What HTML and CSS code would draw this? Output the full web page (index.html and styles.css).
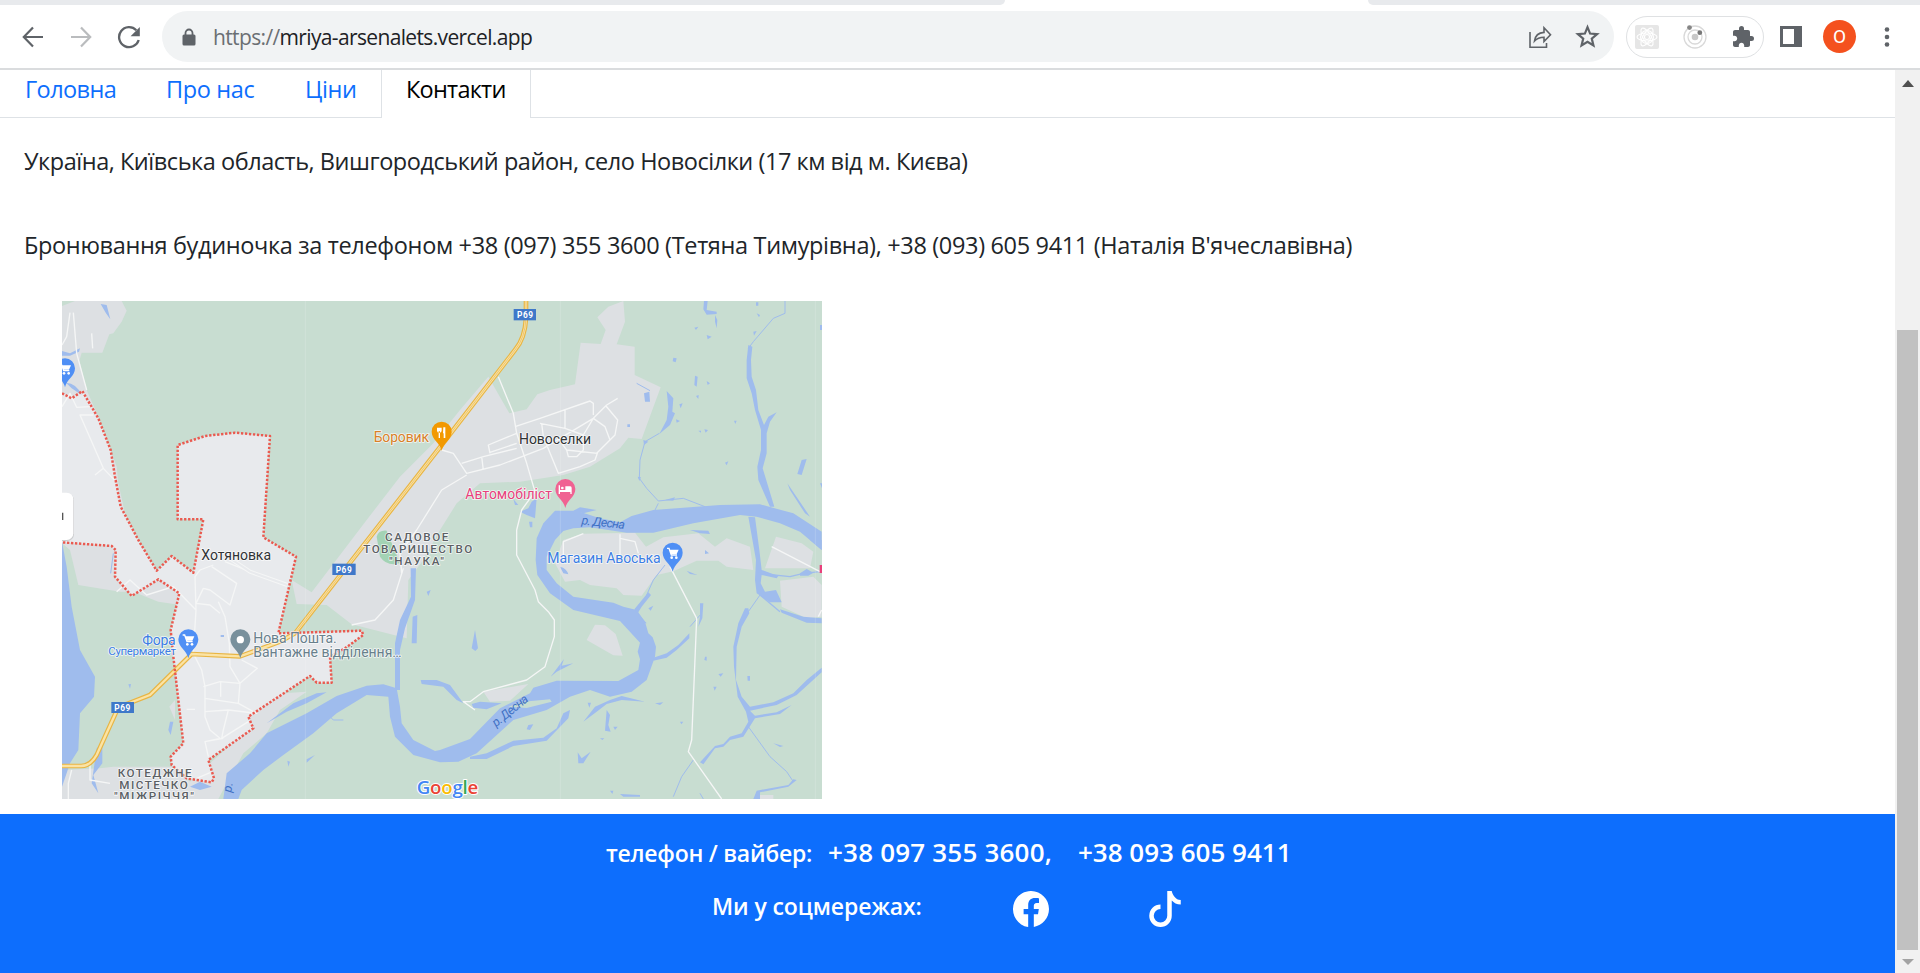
FILE: index.html
```html
<!DOCTYPE html>
<html lang="uk">
<head>
<meta charset="utf-8">
<title>Мрія Арсеналець</title>
<link rel="stylesheet" href="styles.css">
</head>
<body>
<div class="browser">
  <div class="tabstrip"><div class="tabs-left"></div><div class="tabs-right"></div></div>
  <header class="toolbar">
    <div class="nav-buttons">
      <svg class="icon" viewBox="0 0 24 24" fill="none" stroke="#5f6368" stroke-width="2.2"><path d="M22 12H3M12 2.5L2.8 12l9.2 9.5"/></svg>
      <svg class="icon" viewBox="0 0 24 24" fill="none" stroke="#babcbe" stroke-width="2.2"><path d="M2 12h19M12 2.5l9.2 9.5-9.2 9.5"/></svg>
      <svg class="icon" viewBox="0 0 24 24"><path d="M19.3 5.2A10 10 0 1 0 21.7 15" fill="none" stroke="#5f6368" stroke-width="2.3"/><path d="M22.8 2v9.2h-9.2z" fill="#5f6368"/></svg>
    </div>
    <div class="omnibox">
      <svg class="lock" viewBox="0 0 14 18"><path d="M3.5 8V5a3.5 3.5 0 0 1 7 0v3" fill="none" stroke="#5f6368" stroke-width="1.8"/><rect x=".5" y="6.5" width="13" height="11" rx="1.5" fill="#5f6368"/></svg>
      <span class="url"><span class="scheme">https://</span>mriya-arsenalets.vercel.app</span>
      <svg class="share" viewBox="0 0 24 24" fill="none" stroke="#5f6368" stroke-width="1.6"><path d="M2 7v15.2h16.5V18M6.5 16c.7-5 3.5-8.3 9.5-8.6V2.8l6.5 7-6.5 6.8v-4.4c-4 0-7 1-9.500 3.800z"/></svg>
      <svg class="star" viewBox="0 0 24 24" fill="none" stroke="#5f6368" stroke-width="2.1"><path d="M12 3l2.5 6.200 6.700.5-5.100 4.300 1.600 6.600-5.700-3.600-5.700 3.600 1.600-6.600-5.100-4.300 6.700-.5z"/></svg>
    </div>
    <div class="extensions">
      <svg class="icon" viewBox="0 0 24 24"><rect width="24" height="24" rx="2" fill="#e6e6e6"/><g fill="none" stroke="#fff" stroke-width="1.1"><circle cx="12" cy="12" r="2.500"/><ellipse cx="12" cy="12" rx="10" ry="4"/><ellipse cx="12" cy="12" rx="10" ry="4" transform="rotate(60 12 12)"/><ellipse cx="12" cy="12" rx="10" ry="4" transform="rotate(120 12 12)"/><circle cx="12" cy="12" r="6.500"/></g></svg>
      <svg class="icon" viewBox="0 0 24 24"><g fill="none" stroke="#d9d9d9" stroke-width="1.3"><circle cx="12" cy="12" r="11"/><circle cx="12" cy="12" r="7"/></g><circle cx="12" cy="12" r="3.300" fill="#c8c8c8"/><circle cx="6.500" cy="2.600" r="2.400" fill="#858585"/><circle cx="16.800" cy="7.700" r="2.400" fill="#777"/></svg>
      <svg class="icon" viewBox="0 0 24 24"><path fill="#5f6368" d="M20.500 11H19V7c0-1.100-.9-2-2-2h-4V3.500a2.500 2.500 0 0 0-5 0V5H4c-1.100 0-2 .9-2 2v3.800h1.500c1.500 0 2.700 1.200 2.700 2.700S5 16.200 3.500 16.200H2V20c0 1.100.9 2 2 2h3.800v-1.500c0-1.500 1.200-2.700 2.700-2.700s2.700 1.200 2.700 2.700V22H17c1.100 0 2-.9 2-2v-4h1.500a2.500 2.500 0 0 0 0-5z"/></svg>
    </div>
    <svg class="panel" viewBox="0 0 22 21"><path fill="#5f6368" fill-rule="evenodd" d="M0 0h22v21H0zM3 3v15h11V3z"/></svg>
    <div class="avatar">O</div>
    <svg class="dots" viewBox="0 0 6 20" fill="#5f6368"><circle cx="3" cy="2.500" r="2.300"/><circle cx="3" cy="10" r="2.300"/><circle cx="3" cy="17.500" r="2.300"/></svg>
  </header>
  <div class="viewport">
    <div class="page">
      <nav class="tabs">
        <a class="tab t1">Головна</a><a class="tab t2">Про нас</a><a class="tab t3">Ціни</a><a class="tab active">Контакти</a>
      </nav>
      <main class="content">
        <p class="line address">Україна, Київська область, Вишгородський район, село Новосілки (17 км від м. Києва)</p>
        <p class="line booking">Бронювання будиночка за телефоном +38 (097) 355 3600 (Тетяна Тимурівна), +38 (093) 605 9411 (Наталія В'ячеславівна)</p>
        <svg class="map" viewBox="36 33 2280 1494" preserveAspectRatio="none">
          <rect x="36" y="33" width="2280" height="1494" fill="#c8ddd1"/>
          <!-- built-up land -->
          <g fill="#dde0e3">
            <path d="M36 48L75 33H215L230 62L215 95L190 130L178 133L157 188H95L88 212L110 300L145 380L200 530L205 580L225 670L265 750L320 842L365 798L430 848L430 950L325 935L250 905L210 905L85 885L60 780L36 760z"/>
            <path d="M785 907L950 690L1050 560L1150 460L1230 360L1315 260L1378 370L1430 358L1462 313L1500 300L1575 283L1592 158L1652 162L1667 120L1642 82L1675 50L1720 33L1725 95L1700 163L1754 170V255L1832 292L1775 447L1735 443L1710 475L1620 530L1540 555L1410 575L1290 580L1220 640L1170 720L1120 810L1075 870L1070 1045L905 1003L830 945L740 942L725 870z"/>
            <path d="M36 1440L150 1435L190 1430L365 1430L420 1475L600 1310L595 1280L700 1210L770 1205L690 1260L650 1330L580 1390L530 1480L505 1527H36z"/>
            <path d="M358 1250L375 1230V1290z"/>
            <path d="M1540 750L1600 731L1755 728L1788 770L1840 742L1945 730L1995 770L2030 745L2100 770L2110 840L2030 830L2005 812L1940 812L1870 844L1820 855L1775 917L1720 915L1700 895L1620 885L1590 870L1545 875L1515 820z"/>
            <path d="M2178 740L2255 760L2290 785L2280 835L2145 835zM2190 872L2290 860L2315 885V980L2270 985L2195 950zM1610 1050L1635 1004L1665 1006L1697 1032L1718 1097L1690 1096zM1300 1205L1435 1182L1380 1232L1320 1235zM2115 1515H2170V1527H2115z"/>
          </g>
          <path d="M980 740Q985 720 1010 722L1050 820Q1010 830 990 800z" fill="#a3d3b4"/>
          <path fill="#e8eaed" d="M36 310L65 325L97 303L145 385L182 480L195 560L212 650L265 750L320 842L365 798L430 848L460 688H383V465L465 438L555 428L660 438L640 742L738 800L685 1030L935 1022L940 1035L885 1075L840 1100L845 1178H800L780 1158L595 1280L610 1315L475 1410L492 1465L485 1477L410 1465L365 1425L362 1400L400 1360L370 1100L362 1020L388 910L325 868L245 918L195 860L197 780L185 768L36 757z"/>
          <!-- water -->
          <g fill="#9fbced">
            <path d="M36 755L50 830L65 950L90 1080L135 1160L132 1220L90 1270L85 1380L60 1420L36 1490zM152 42L170 45L181 88L168 70zM36 183L60 190L90 175L87 185L60 197H36zM48 278Q80 280 95 315L65 295zM140 1375L157 1360V1420L130 1455L145 1510L125 1480zM360 1295H370L362 1335L355 1320zM420 1490L450 1475L485 1490L450 1500z"/>
            <path d="M1082 835H1098L1095 930L1065 1015L1050 1080V1200H1035V1060L1050 990L1083 920zM1088 980L1102 975L1100 1060L1085 1060zM1130 905L1142 900L1135 918zM1112 1170H1160L1200 1185L1240 1240L1220 1230L1180 1190L1115 1182z"/>
            <path d="M650 1300L730 1240L800 1210L830 1207L770 1240L710 1265z"/>
            <g transform="translate(1170 750)">
              <path d="M1145 -25L1060 -80L960 -107L840 -105L640 -90L575 -72L540 -53L480 -65L410 -88H345L310 -50L290 -5L287 60L292 105L330 160L400 210L540 243L600 308L593 335L600 358L595 390L535 423L350 422L280 443L270 460L180 505L90 597L0 630L-15 633L-80 600L-115 550L-120 500L-130 445L-170 433L-220 437L-310 468L-400 520L-520 580L-570 640L-640 700L-650 777H-605L-595 750L-530 690L-470 645L-380 580L-310 520L-220 465L-155 470L-150 530L-135 590L-80 645L0 667L55 665L110 640L220 540L320 510L390 470L450 450L510 470L575 455L620 420L645 350L648 320L638 292L625 280L615 245L590 210L550 200L520 188L400 170L350 130L320 90V50L345 0L370 -27L400 -35L450 -38L560 -22H640L760 -50L900 -75L950 -70L1020 -50L1080 -25L1145 30z"/>
              <path d="M400 -88L420 -98L470 -90L430 -80zM750 -30L805 -28L810 -18L780 -20zM925 -70L945 -68L958 30L965 90L1015 108L1010 115L965 105L962 130L975 155L1008 150L1025 187H990L950 160L945 120L948 60zM1020 208L1090 230L1145 235V250L1100 248L1025 218zM1080 100L1100 87L1120 98L1105 107H1080zM1110 0H1145V30z"/>
              <path d="M625 157L633 165L605 200L593 220L620 250L610 250L583 208zM640 353L680 340L715 315L748 280V295L710 330L680 353L640 362zM780 190H790L787 235L775 260L780 230zM795 350L800 350V362L793 360zM835 402L850 400L842 410zM820 440L830 440L824 452zM922 408H930V422H923zM95 325L105 270L114 325L106 333zM332 410L372 357L365 377L400 370L350 395zM360 80Q380 85 385 103L370 100zM740 92L772 105L750 102zM795 30L807 40L795 42zM625 205L640 197L632 212z"/>
              <path d="M90 650L140 640L220 602L310 593L350 565L370 520L390 510L385 535L320 602L220 618L140 657H90zM95 492L120 485L185 490L140 508L100 503zM430 545L465 500L510 480L545 468L615 485L545 480L500 492L470 515zM500 510L510 525L505 555L512 575L495 572zM265 555L280 553L270 570L260 568zM443 488H453L448 503zM645 490L670 487L660 495zM413 637L425 655L452 635L430 670H415zM520 560L533 560L525 570zM540 762L600 765V770H550zM720 545L730 545L724 553zM480 595H493L487 600zM510 752L520 752L517 762zM1000 610L1030 618L1020 621z"/>
              <path d="M915 205H925L928 220L905 260L890 320L888 420L905 470L930 500L1000 487L1060 460L1100 420L1145 383V397L1070 465L1010 495L930 512L945 527L1010 517L1055 495L1020 522L945 535L910 590L870 600L850 620L825 625L790 673L780 667L825 618L850 612L870 590L905 580L925 545L918 515L893 470L882 380L880 320L895 250zM1070 720L1045 740L960 757V777H940L950 752L1045 735L1060 718z"/>
            </g>
            <g transform="translate(1170 0)">
              <path d="M792 33H803L800 60L830 65V72L800 74L790 58zM825 75L832 90L830 115L825 95zM925 165L937 170L933 210L935 260L948 300L955 360L972 405L985 380L1010 367L990 395L980 430L980 490L968 535L1003 650L990 650L955 570L952 530L963 480L963 420L945 360L935 310L920 265V210zM680 303L700 325L697 365L705 370L690 405L658 432L680 390L685 350zM1072 552L1085 510L1100 507L1085 555zM1042 580L1110 680L1095 670L1050 600zM240 665L265 655L275 635L290 625L285 685L260 675zM267 695H277V712H270zM220 627L235 645L225 645z"/>
              <path d="M765 257L773 260L770 290L763 285zM700 203L710 205L707 217L698 214zM940 125L950 123L942 137zM800 135L815 140L803 148zM763 113L775 110L768 120zM950 70L960 75L957 82zM948 37H955V47H948zM800 273L810 280L803 285zM768 318L776 315L775 327zM718 343L728 340L722 355zM882 392L890 392L886 402zM708 388L720 393L710 398zM793 418L804 420L797 428zM775 422H783V428zM562 403H570V411H562zM612 310L628 305L630 335L615 335zM855 518L865 514L860 526zM610 450L625 455L612 465zM593 560L603 562L598 573zM675 630L705 622L700 632z"/>
            </g>
            <path d="M2310 105H2316V120H2310zM2310 580H2316V595zM235 1183L243 1182L240 1196zM512 1035H522V1041H512zM770 1408L795 1395L770 1418zM712 1412L720 1415L715 1430z"/>
          </g>
          <g fill="none" stroke="#9fbced" stroke-width="3">
            <path d="M2205 33V70L2170 85L2110 155L2095 175M1828 430L1785 455L1770 510L1768 565L1790 595L1825 633L1900 625L1965 650M1825 640L1815 660M1760 280L1800 302M1845 825L1810 870L1790 915M2130 915L2095 965M2095 1310L2160 1400L2210 1445L2230 1475M1930 1410L1895 1460L1870 1520M1950 1510L1960 1527M1920 1010L1955 970M835 1275L850 1290H880M190 790L182 850"/>
            <path d="M2125 850L2220 860L2260 850L2310 845M2130 915L2190 965" stroke-width="4"/>
          </g>
          <path d="M1375 1250L1420 1235L1500 1228L1505 1235L1430 1254z" fill="#c8ddd1"/>
          <!-- minor roads -->
          <g fill="none" stroke="#f5f6f6" stroke-width="4" stroke-linejoin="round">
            <path d="M60 68L50 140L36 165M70 68L80 190L110 300M125 130L128 175M36 350L60 310L80 352L120 350M130 375H90L160 535L135 555M160 535L195 572M200 905L240 870L290 915L370 890L438 960M490 825L450 840L435 860L438 960L430 1090L455 1140L465 1190V1280L480 1320L510 1345L465 1355L475 1400M485 830L560 880L540 945L480 900L460 895L438 940L480 945L510 970M505 935L525 980L538 1060L540 1130L570 1180L565 1240L465 1225M525 815L600 845L710 885M575 1110L622 1135L570 1180L510 1175L460 1190M512 1175V1220M565 1240L620 1270L535 1260L465 1265M535 1260L520 1320L515 1345L595 1295M465 1355L520 1345M410 1258H435M1060 835L1030 930L975 990L905 1005M65 1440L55 1480V1527M120 1425V1470L180 1480M440 1465L480 1448"/>
            <path d="M1345 260L1390 370L1400 430L1430 520L1455 605L1415 660L1400 720V795L1455 900L1465 935L1495 965L1513 990V1040L1485 1130L1430 1170L1300 1205L1260 1235H1240L1275 1260"/>
            <path d="M1175 480L1210 490L1250 550L1350 525L1480 475L1630 385L1670 345L1703 325M1175 600L1250 555M1175 600L1100 720L1050 790L1055 850M1235 520L1300 500L1400 475M1320 490L1315 465L1400 430M1295 500L1300 540M1320 487L1400 460M1395 410L1470 385L1620 333L1630 340V375M1470 400L1545 415V360M1475 400L1480 440L1525 550L1590 530L1635 510L1642 490L1550 480L1555 500L1580 500L1600 480L1600 435L1545 415M1600 435L1630 385L1665 410L1680 450M1668 348L1703 390L1695 435L1640 490M1550 480L1535 460M1710 800V733M1540 810V755L1600 731M1710 745L1755 755L1765 790M1860 830L1940 985L1925 1350L1915 1385L2015 1527M2165 770L2310 845M2315 960L2305 980"/>
          </g>
          <path d="M540 805L600 845L712 885" fill="none" stroke="#f5f6f6" stroke-width="12"/>
          <path d="M540 805L600 845L712 885" fill="none" stroke="#e8eaed" stroke-width="6"/>
          <g fill="none" stroke-linejoin="round">
            <path d="M1428 33V85Q1425 145 1395 180L1175 465L735 1030L690 1055L570 1099L425 1092L300 1215L205 1252L140 1395Q120 1430 90 1428H36" stroke="#e8b544" stroke-width="14"/>
            <path d="M1428 33V85Q1425 145 1395 180L1175 465L735 1030L690 1055L570 1099L425 1092L300 1215L205 1252L140 1395Q120 1430 90 1428H36" stroke="#fbe3a4" stroke-width="7"/>
            <path d="M1428 33V85Q1425 145 1395 180L1175 465L735 1030" stroke="#e3b75a" stroke-width="2"/>
            <path stroke="#ea5a50" stroke-width="7.500" stroke-dasharray="7 5" d="M36 310L65 325L97 303L145 385L182 480L195 560L212 650L265 750L320 842L365 798L430 848L460 688H383V465L465 438L555 428L660 438L640 742L738 800L685 1030L935 1022L940 1035L885 1075L840 1100L845 1178H800L780 1158L595 1280L610 1315L475 1410L492 1465L485 1477L410 1465L365 1425L362 1400L400 1360L370 1100L362 1020L388 910L325 868L245 918L195 860L197 780L185 768L36 757"/>
          </g>
          <path d="M766 33V1527M1531 33V1527M2296 33V1527" stroke="#fff" stroke-opacity=".25" stroke-width="2"/>
          <!-- road shields -->
          <g class="shield">
            <rect x="1391" y="57" width="67" height="34"/><rect x="847" y="821" width="70" height="34"/><rect x="184" y="1236" width="68" height="33"/>
            <text x="1401" y="83" textLength="48">P69</text><text x="857" y="848" textLength="48">P69</text><text x="193" y="1262" textLength="48">P69</text>
          </g>
          <!-- place markers -->
          <defs><path id="pin" d="M0 0C-5 -25 -30 -32 -30 -57A30 30 0 0 1 30 -57C30 -32 5 -25 0 0z"/>
            <g id="cart"><path d="M-17 -70H-11L-4 -50H13" fill="none" stroke="#fff" stroke-width="4"/><path d="M-10 -66H18L12 -53H-5z" fill="#fff"/><circle cx="-3" cy="-42" r="4" fill="#fff"/><circle cx="11" cy="-42" r="4" fill="#fff"/></g></defs>
          <g transform="translate(45 292)"><use href="#pin" fill="#4f8ff5"/><use href="#cart"/></g>
          <g transform="translate(415 1105)"><use href="#pin" fill="#4f8ff5"/><use href="#cart"/></g>
          <g transform="translate(1868 845)"><use href="#pin" fill="#4f8ff5"/><use href="#cart"/></g>
          <g transform="translate(571 1105)"><use href="#pin" fill="#78909c"/><circle cy="-56" r="11" fill="#fff"/></g>
          <g transform="translate(1175 482)"><use href="#pin" fill="#f29900"/><path d="M-14 -69V-60Q-14 -54 -7 -54T0 -60V-69zM-9 -58H-5V-38H-9zM5 -70H11V-38H6V-52H4z" fill="#fff"/></g>
          <g transform="translate(1546 654)"><use href="#pin" fill="#f06292"/><path d="M-20 -68H-16V-54H0V-65H15Q19 -65 19 -60V-42H15V-48H-16V-42H-20z" fill="#fff"/><circle cx="-9" cy="-60" r="4" fill="#fff"/></g>
          <g class="label">
            <text x="971" y="456" textLength="166" fill="#d98028">Боровик</text>
            <text x="1407" y="462" textLength="216" fill="#303336">Новоселки</text>
            <text x="454" y="809" textLength="209" fill="#303336">Хотяновка</text>
            <text x="1246" y="627" textLength="260" fill="#e8407b">Автомобіліст</text>
            <text x="1492" y="818" textLength="340" fill="#3b7de4">Магазин Авоська</text>
            <text x="277" y="1064" textLength="100" fill="#3b7de4">Фора</text>
            <text class="small" x="175" y="1096" textLength="203" fill="#3b7de4">Супермаркет</text>
            <text x="610" y="1058" textLength="250" fill="#68808c">Нова Пошта.</text>
            <text x="610" y="1100" textLength="445" fill="#68808c">Вантажне відділення…</text>
          </g>
          <g class="label area">
            <text x="1005" y="753" textLength="190">САДОВОЕ</text>
            <text x="940" y="789" textLength="327">ТОВАРИЩЕСТВО</text>
            <text x="1017" y="825" textLength="165">"НАУКА"</text>
            <text x="203" y="1462" textLength="222">КОТЕДЖНЕ</text>
            <text x="208" y="1498" textLength="205">МІСТЕЧКО</text>
            <text x="192" y="1530" textLength="240">"МІЖРІЧЧЯ"</text>
          </g>
          <g class="river">
            <text transform="translate(1594 703) rotate(6)" textLength="130">р. Десна</text>
            <text transform="translate(1338 1312) rotate(-39)" textLength="128">р. Десна</text>
            <text transform="translate(544 1508) rotate(-82)">р.</text>
          </g>
          <text class="google" x="1100" y="1512" textLength="185"><tspan fill="#4285f4">G</tspan><tspan fill="#ea4335">o</tspan><tspan fill="#fbbc04">o</tspan><tspan fill="#4285f4">g</tspan><tspan fill="#34a853">l</tspan><tspan fill="#ea4335">e</tspan></text>
          <rect x="0" y="611" width="72" height="142" rx="20" fill="#999" opacity=".35"/>
          <rect x="0" y="608" width="70" height="142" rx="20" fill="#fff"/>
          <path d="M36 668H40V690H36z" fill="#555"/>
          <path d="M2309 825H2316V849H2309z" fill="#e8407b"/>
        </svg>
      </main>
      <footer class="footer">
        <div class="phones"><span class="foot-label">телефон / вайбер:</span><span class="phone first">+38 097 355 3600,</span><span class="phone second">+38 093 605 9411</span></div>
        <div class="social"><span class="foot-label soc">Ми у соцмережах:</span>
          <svg class="brand fb" viewBox="0 0 16 16" fill="#fff"><path d="M16 8.049c0-4.446-3.582-8.050-8-8.050C3.580 0-.002 3.603-.002 8.050c0 4.017 2.926 7.347 6.750 7.951v-5.625h-2.030V8.050H6.750V6.275c0-2.017 1.195-3.131 3.022-3.131.876 0 1.791.157 1.791.157v1.980h-1.009c-.993 0-1.303.621-1.303 1.258v1.510h2.218l-.354 2.326H9.250V16c3.824-.604 6.750-3.934 6.750-7.951z"/></svg>
          <svg class="brand" viewBox="0 0 16 16" fill="#fff"><path d="M9 0h1.980c.144.715.540 1.617 1.235 2.512C12.895 3.389 13.797 4 15 4v2c-1.753 0-3.070-.814-4-1.829V11a5 5 0 1 1-5-5v2a3 3 0 1 0 3 3z"/></svg>
        </div>
      </footer>
    </div>
    <div class="scrollbar">
      <svg class="arrow" viewBox="0 0 12 7"><path d="M0 7L6 0l6 7z" fill="#505050"/></svg>
      <div class="thumb"></div>
      <svg class="arrow" viewBox="0 0 12 7"><path d="M0 0h12L6 6z" fill="#a3a3a3"/></svg>
    </div>
  </div>
</div>
</body>
</html>
```
FILE: styles.css
```css
* { box-sizing: border-box; }
body { margin: 0; background: #fff; overflow: hidden; font-family: "Open Sans", "Noto Sans", sans-serif; color: #212529; }
.browser { width: 1920px; height: 973px; display: flex; flex-direction: column; }
.tabstrip { height: 5px; display: flex; justify-content: space-between; }
.tabs-left { width: 1005px; background: #e8eaed; border-bottom-right-radius: 5px; }
.tabs-right { width: 552px; background: #e8eaed; border-bottom-left-radius: 5px; }
.toolbar { height: 65px; border-bottom: 2px solid #dadcde; display: flex; align-items: center; padding: 0 0 0 21px; }
.icon { width: 24px; height: 24px; display: block; }
.nav-buttons { display: flex; gap: 24px; width: 141px; }
.omnibox { width: 1452px; height: 51px; border-radius: 26px; background: #f1f3f4; display: flex; align-items: center; padding: 0 14px 0 20px; }
.lock { width: 14px; height: 18px; }
.url { margin-left: 17px; flex: 1; font-size: 21px; line-height: 30px; letter-spacing: -.64px; white-space: nowrap; color: #202124; }
.scheme { color: #6b6f73; }
.share { width: 24px; height: 24px; margin-right: 23px; }
.star { width: 25px; height: 25px; }
.extensions { width: 138px; height: 42px; margin-left: 12px; border: 1.500px solid #dfe1e3; border-radius: 21px; display: flex; align-items: center; gap: 24px; padding-left: 8px; }
.panel { width: 22px; height: 21px; margin-left: 16px; }
.avatar { width: 33px; height: 33px; margin-left: 21px; border-radius: 50%; background: #f4511e; color: #fff; font: 19px/33px Roboto, sans-serif; text-align: center; }
.dots { width: 6px; height: 20px; margin-left: 28px; }
.viewport { flex: 1; display: flex; min-height: 0; }
.page { width: 1895px; display: flex; flex-direction: column; }
.tabs { height: 48px; display: flex; border-bottom: 1px solid #dee2e6; font-size: 23.500px; line-height: 32px; }
.tab { height: 48px; padding: 3px 0 0 25px; color: #0d6efd; white-space: nowrap; letter-spacing: -.6px; }
.t1 { width: 141px; }
.t2 { width: 139px; letter-spacing: -.35px; }
.t3 { width: 101px; letter-spacing: -.4px; }
.active { width: 150px; padding-left: 24px; letter-spacing: -.75px; color: #000; background: #fff; border: solid #dee2e6; border-width: 0 1px; }
.content { height: 696px; padding: 27px 0 0 24px; }
.line { margin: 0; font-size: 23.500px; line-height: 32px; white-space: nowrap; }
.address { letter-spacing: -.46px; }
.booking { margin-top: 52px; letter-spacing: -.34px; }
.map { display: block; width: 760px; height: 498px; margin: 40px 0 0 37.700px; }
.shield rect { fill: #3f78c9; }
.shield text { font: 700 25px Roboto, sans-serif; fill: #fff; }
.label { font: 400 42px Roboto, sans-serif; paint-order: stroke; stroke: #fff; stroke-opacity: .75; stroke-width: 5px; stroke-linejoin: round; }
.label .small { font-size: 35px; }
.area { font-size: 35px; font-weight: 500; fill: #5b6064; }
.river { font: italic 400 37px Roboto, sans-serif; fill: #3e70c4; }
.google { font: 600 56px "Open Sans", sans-serif; paint-order: stroke; stroke: #fff; stroke-width: 6px; stroke-linejoin: round; }
.footer { flex: 1; background: #0d6efd; color: #fff; font-weight: 600; white-space: nowrap; padding-top: 19px; }
.phones { height: 38px; display: flex; align-items: baseline; padding-left: 606px; }
.foot-label { font-size: 23px; line-height: 38px; width: 222px; letter-spacing: -.25px; }
.phone { font-size: 26px; line-height: 38px; }
.first { width: 250px; letter-spacing: .2px; }
.social { display: flex; height: 38px; margin-top: 16px; padding-left: 712px; align-items: center; }
.soc { width: 301px; letter-spacing: -.1px; }
.brand { width: 36px; height: 36px; margin-top: 5px; }
.fb { margin-right: 98px; }
.scrollbar { width: 25px; background: #f1f1f1; display: flex; flex-direction: column; align-items: center; padding-top: 10px; }
.arrow { width: 12px; height: 7px; }
.thumb { width: 21px; height: 620px; margin: 243px 0 9px; background: #c1c1c1; }
```
